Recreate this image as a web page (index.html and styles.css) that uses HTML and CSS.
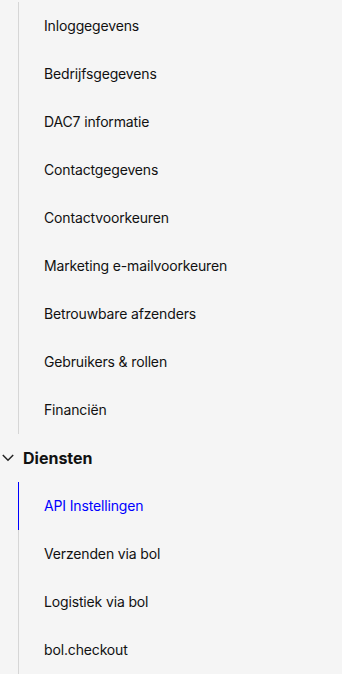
FILE: index.html
```html
<!DOCTYPE html>
<html>
	<head>
		<meta charset="utf-8">
		<meta name="viewport" content="width=device-width, initial-scale=1.0">
		<title>Instellingen</title>
		<link rel="stylesheet" href="styles.css">
	</head>
	<body>
		<nav class="menu">
			<ul class="group">
				<li class="item">Inloggegevens</li>
				<li class="item">Bedrijfsgegevens</li>
				<li class="item">DAC7 informatie</li>
				<li class="item">Contactgegevens</li>
				<li class="item">Contactvoorkeuren</li>
				<li class="item">Marketing e-mailvoorkeuren</li>
				<li class="item">Betrouwbare afzenders</li>
				<li class="item">Gebruikers &amp; rollen</li>
				<li class="item">Financiën</li>
			</ul>

			<div class="heading">
				<svg class="chevron" width="12" height="12" viewBox="0 0 12 12">
					<path d="M0.8 3 L6 8.2 L11.2 3" fill="none" stroke="#222" stroke-width="1.5"/>
				</svg>
				<span>Diensten</span>
			</div>

			<ul class="group">
				<li class="item active">API Instellingen</li>
				<li class="item">Verzenden via bol</li>
				<li class="item">Logistiek via bol</li>
				<li class="item">bol.checkout</li>
			</ul>
		</nav>
	</body>
</html>
```

FILE: styles.css
```css
html, body{
	margin: 0;
	padding: 0;
	background-color: #f5f5f5;
}
body{
	font-family: Inter, "Liberation Sans", sans-serif;
	color: #111;
}
.menu{
	padding-top: 2px;
}
.group{
	list-style: none;
	margin: 0 0 0 18px;
	padding: 0;
	border-left: 1px solid #d6d6d6;
}
.item{
	position: relative;
	height: 48px;
	display: flex;
	align-items: center;
	padding-left: 25px;
	padding-bottom: 2px;
	box-sizing: border-box;
	font-size: 14px;
	letter-spacing: -0.15px;
}
.item.active{
	color: #0000ff;
}
/* blauwe streep over de grijze lijn */
.item.active::before{
	content: '';
	position: absolute;
	left: -1px;
	top: 0;
	width: 1px;
	height: 48px;
	background-color: #0000ff;
}
.heading{
	height: 48px;
	display: flex;
	align-items: center;
	padding-left: 2px;
	font-size: 16px;
	font-weight: 700;
}
.chevron{
	margin-right: 9px;
}
```
